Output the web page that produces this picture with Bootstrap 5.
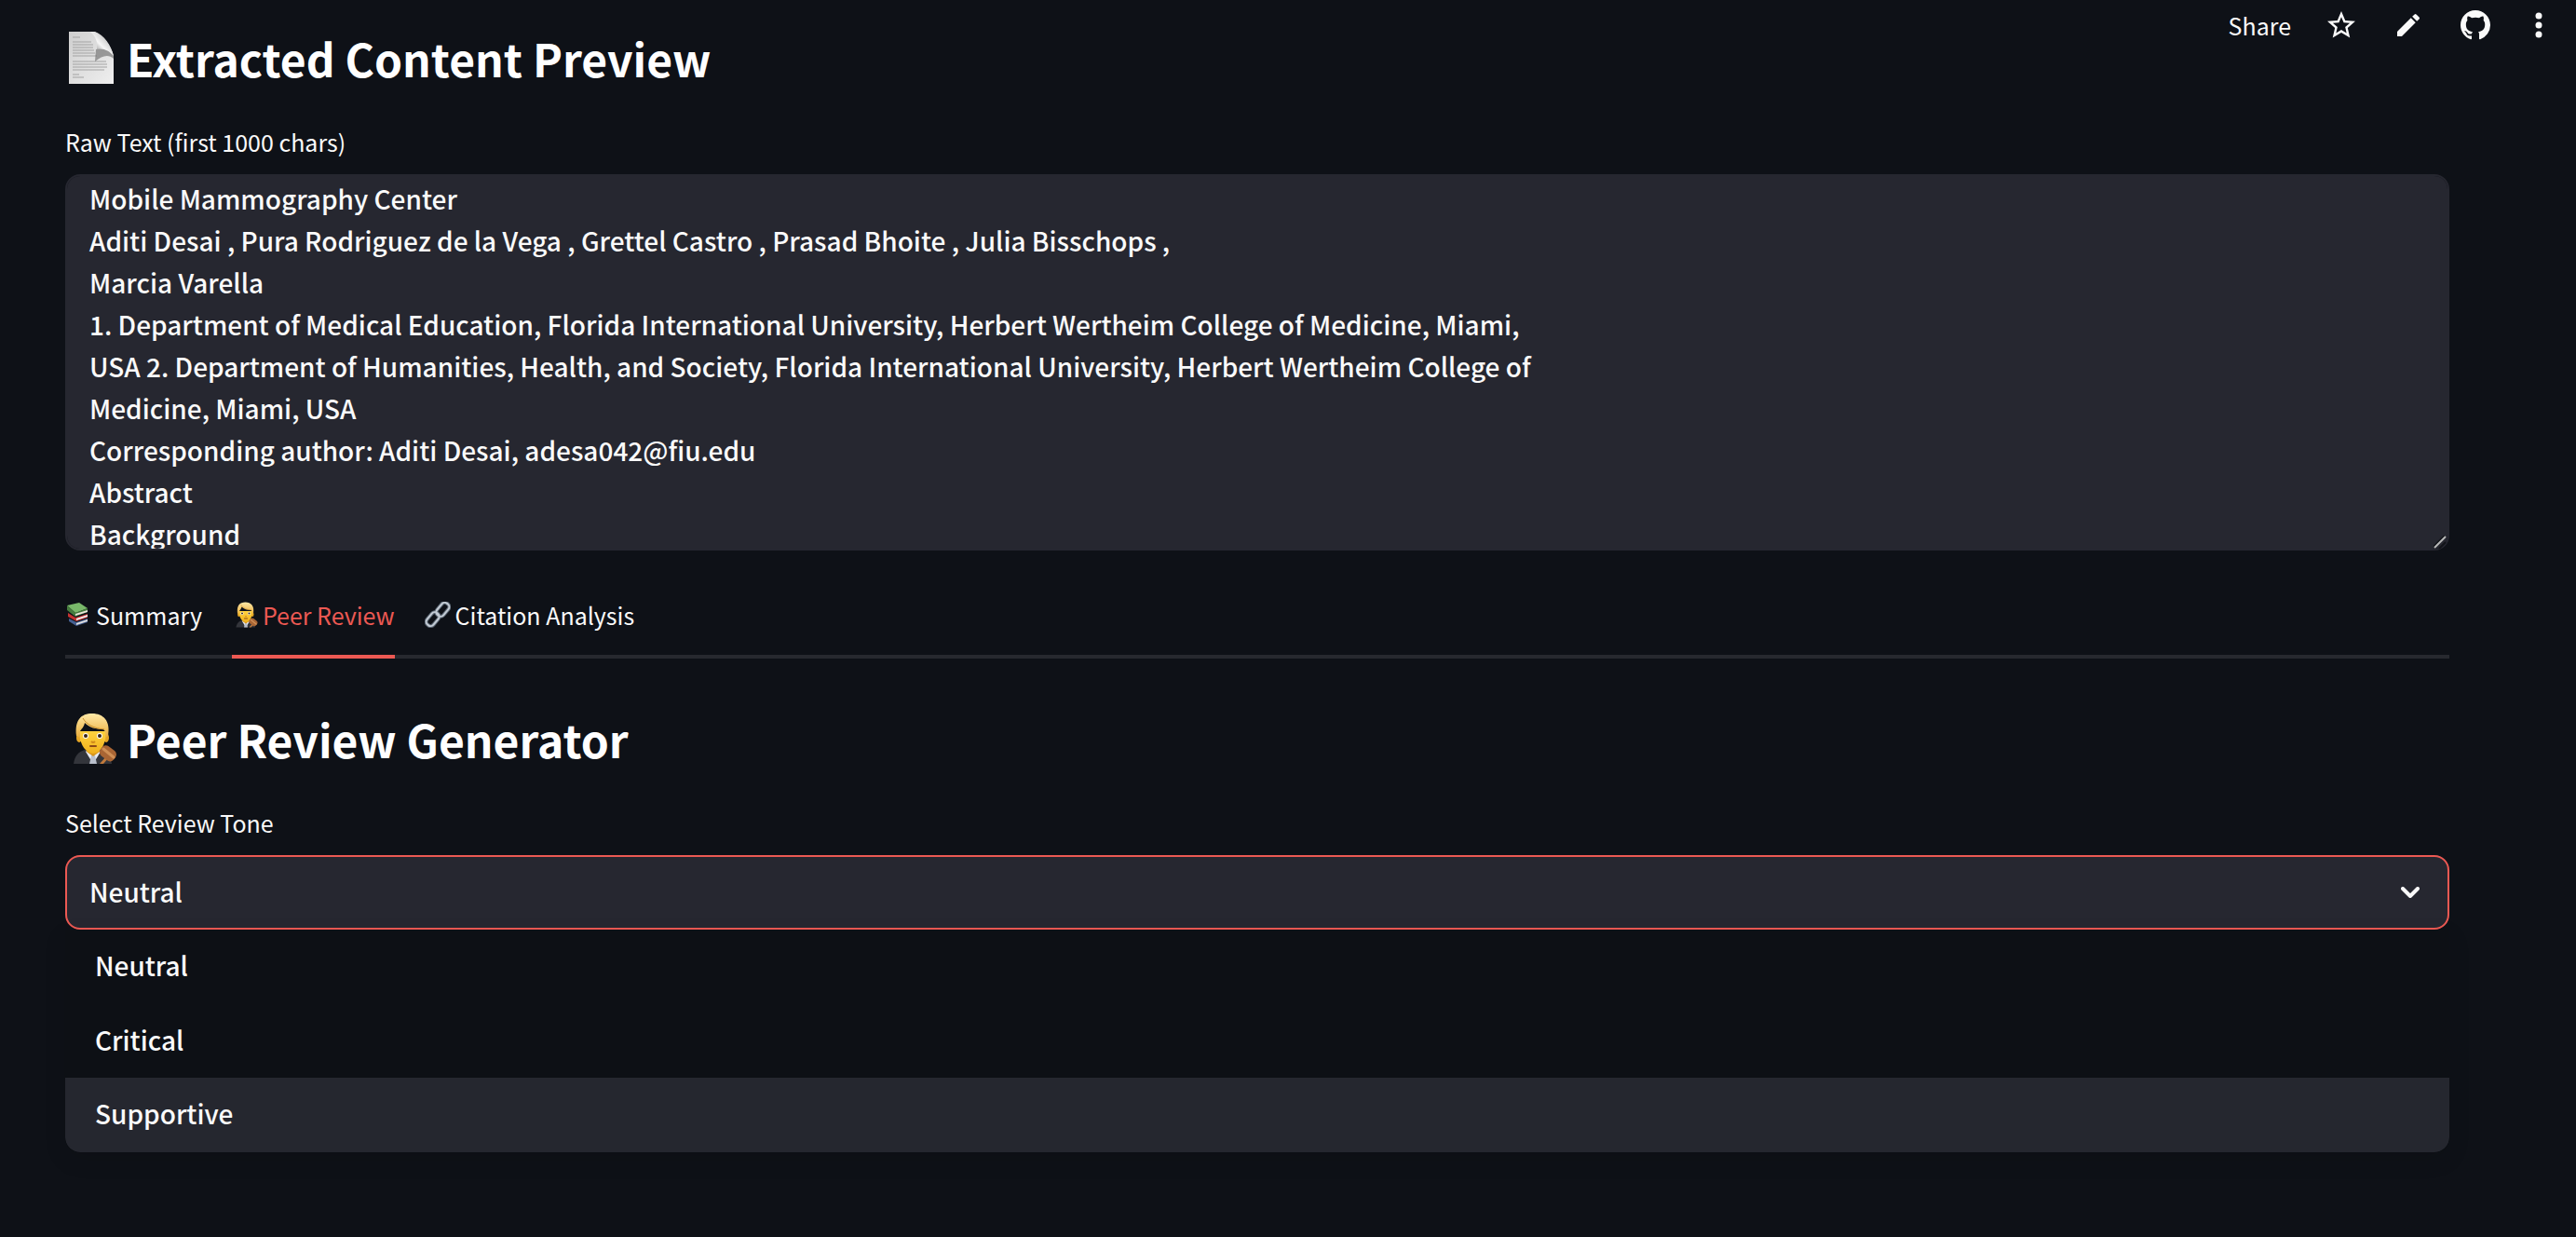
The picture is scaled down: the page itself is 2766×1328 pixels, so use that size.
<!DOCTYPE html>
<html lang="en" data-bs-theme="dark">
<head>
<meta charset="utf-8">
<meta name="viewport" content="width=device-width, initial-scale=1">
<title>Extracted Content Preview</title>
<link href="https://cdn.jsdelivr.net/npm/bootstrap@5.3.0/dist/css/bootstrap.min.css" rel="stylesheet">
<style>
:root { --page: #0e1117; --field: #262730; --ink: #fafafa; --accent: #ec5953; }
body { background: var(--page); color: var(--ink); font-family: "Noto Sans CJK SC", "Noto Sans", sans-serif; font-size: 25px; line-height: 40px; }
.toolbar { top: 0; right: 0; height: 54px; gap: 36px; padding-right: 26px; }
.toolbar .btn { font-size: 25px; line-height: 40px; color: var(--ink); }
.toolbar svg { display: block; }
.page-body { padding: 26px 136px 0 70px; min-height: 100vh; }
.section-title { font-size: 48px; line-height: 72px; font-weight: 700; gap: 10px; margin: 0; }
.section-title svg { flex: none; }
.field-label { display: block; line-height: 40px; margin: 34px 0 15px; }
.field-box { background-color: var(--field) !important; color: var(--ink) !important; border: 2px solid var(--field); border-radius: 16px; font-size: 28px; font-weight: 500; box-shadow: none !important; }
.raw-text { height: 404px; line-height: 45px; padding: 2px 24px 0; resize: none; overflow: hidden; white-space: pre; display: block; }
.grip { right: 3px; bottom: 2px; }
.tab-strip { margin-top: 32px; border-bottom: 4px solid #27292f; gap: 32px; --bs-nav-tabs-border-width: 0; flex-wrap: nowrap; }
.tab-strip .nav-link { color: var(--ink); background: none; border: 0; border-bottom: 4px solid transparent; border-radius: 0; padding: 17px 0 23px; margin-bottom: -4px; line-height: 40px; gap: 5px; }
.tab-strip .nav-link.active { color: var(--accent); background: none; border-bottom-color: var(--accent); }
.second { margin-top: 50px; }
.tone-select { height: 80px; border-color: var(--accent) !important; padding: 0 80px 2px 24px; background-image: none !important; }
.chevron { right: 32px; top: 34px; pointer-events: none; }
.tone-menu { top: 100%; left: 0; right: 0; z-index: 10; background: #0d1015; border-radius: 0 0 16px 16px; overflow: hidden; box-shadow: 0 8px 24px rgba(0,0,0,.1); }
.tone-menu .list-group-item { background: none; border: 0; margin: 0; color: var(--ink); font-size: 28px; font-weight: 500; line-height: 48px; padding: 14px 32px 18px; }
.tone-menu .list-group-item.active { background: #25272f; }
</style>
<script src="https://cdn.jsdelivr.net/npm/bootstrap@5.3.0/dist/js/bootstrap.bundle.min.js"></script>
</head>
<body>
<svg width="0" height="0" class="position-absolute" aria-hidden="true">
  <defs>
    <linearGradient id="skin" x1="0" y1="0" x2="0" y2="1"><stop offset="0" stop-color="#ffd23f"/><stop offset="1" stop-color="#efb01c"/></linearGradient>
    <linearGradient id="hair" x1="0" y1="0" x2="0" y2="1"><stop offset="0" stop-color="#ffe9a8"/><stop offset="1" stop-color="#e9ad3a"/></linearGradient>
    <linearGradient id="paper" x1="0" y1="0" x2="1" y2="1"><stop offset="0" stop-color="#cfcfcf"/><stop offset="1" stop-color="#efefef"/></linearGradient>
    <linearGradient id="curl" x1="0" y1="1" x2="1" y2="0"><stop offset="0" stop-color="#4a4a4a"/><stop offset=".45" stop-color="#f6f6f6"/><stop offset="1" stop-color="#9a9a9a"/></linearGradient>
    <symbol id="judge" viewBox="-9 0 56 56">
      <path d="M0 55c1-8 5-13 12-15h18c7 2 10 7 11 15z" fill="#33353b"/>
      <path d="M13 42l8 13 8-13-3-3H16z" fill="#e9edf3"/><path d="M19 46h4l2 9h-8z" fill="#b9c0cc"/>
      <path d="M14 34h14v8l-7 5-7-5z" fill="#d8951a"/>
      <ellipse cx="6" cy="27" rx="3" ry="5" fill="#e5a626"/><ellipse cx="35" cy="27" rx="3" ry="5" fill="#e5a626"/>
      <path d="M6 20h29c0 13-6 24-14 24S6 33 6 20z" fill="url(#skin)"/>
      <path d="M3 25C1 8 8 1 20 1s20 8 17 24l-3 2c1-5 0-7-2-9-8 0-15-2-20-7-1 5-4 7-5 9v7z" fill="url(#hair)"/>
      <path d="M10 6c4 7 12 11 23 12" stroke="#c98e2b" stroke-width="1" fill="none"/>
      <ellipse cx="13" cy="25" rx="3" ry="3" fill="#fff"/><ellipse cx="28" cy="25" rx="3" ry="3" fill="#fff"/>
      <circle cx="13" cy="25" r="2" fill="#392414"/><circle cx="28" cy="25" r="2" fill="#392414"/>
      <path d="M19 31q2 2 4 0" stroke="#d08a1a" stroke-width="2" fill="none"/><path d="M18 36h6" stroke="#8d4a17" stroke-width="2" fill="none" stroke-linecap="round"/>
      <path d="M36 46l-8 9h4l7-8z" fill="#c17a3c"/>
      <rect x="28" y="38" width="18" height="13" rx="5" transform="rotate(38 38 44)" fill="#a96534"/><path d="M32 39l11 9" stroke="#cf8f55" stroke-width="3" stroke-linecap="round"/>
    </symbol>
  </defs>
</svg>

<header class="toolbar position-absolute d-flex align-items-center">
  <button class="btn p-0 border-0" type="button">Share</button>
  <button class="btn p-0 border-0" type="button" aria-label="Favorite"><svg width="36" height="36" viewBox="0 0 24 24" fill="currentColor"><path d="M22 9.24l-7.19-.62L12 2 9.19 8.63 2 9.24l5.46 4.73L5.82 21 12 17.27 18.18 21l-1.63-7.03L22 9.24zM12 15.4l-3.76 2.27 1-4.28-3.32-2.88 4.38-.38L12 6.1l1.71 4.04 4.38.38-3.32 2.88 1 4.28L12 15.4z"/></svg></button>
  <button class="btn p-0 border-0" type="button" aria-label="Edit"><svg width="36" height="36" viewBox="-1.5 -1.5 27 27" fill="currentColor"><path d="M3 17.25V21h3.75L17.81 9.94l-3.75-3.75L3 17.25zM20.71 7.04a1 1 0 0 0 0-1.41l-2.34-2.34a1 1 0 0 0-1.41 0l-1.83 1.83 3.75 3.75 1.83-1.83z"/></svg></button>
  <button class="btn p-0 border-0" type="button" aria-label="View source"><svg width="36" height="36" viewBox="-1 -1 18 18" fill="currentColor"><path d="M8 0C3.58 0 0 3.58 0 8c0 3.54 2.29 6.53 5.47 7.59.4.07.55-.17.55-.38 0-.19-.01-.82-.01-1.49-2.01.37-2.53-.49-2.69-.94-.09-.23-.48-.94-.82-1.13-.28-.15-.68-.52-.01-.53.63-.01 1.08.58 1.23.82.72 1.21 1.87.87 2.33.66.07-.52.28-.87.51-1.07-1.78-.2-3.64-.89-3.64-3.95 0-.87.31-1.59.82-2.15-.08-.2-.36-1.02.08-2.12 0 0 .67-.21 2.2.82.64-.18 1.32-.27 2-.27s1.36.09 2 .27c1.53-1.04 2.2-.82 2.2-.82.44 1.1.16 1.92.08 2.12.51.56.82 1.27.82 2.15 0 3.07-1.87 3.75-3.65 3.95.29.25.54.73.54 1.48 0 1.07-.01 1.93-.01 2.2 0 .21.15.46.55.38A8.01 8.01 0 0 0 16 8c0-4.42-3.58-8-8-8z"/></svg></button>
  <button class="btn p-0 border-0" type="button" aria-label="Menu"><svg width="28" height="32" viewBox="0 0 28 32" fill="currentColor"><circle cx="14" cy="6" r="3.5"/><circle cx="14" cy="16" r="3.5"/><circle cx="14" cy="26" r="3.5"/></svg></button>
</header>

<main class="page-body">
  <h2 class="section-title d-flex align-items-center">
    <svg width="56" height="56" viewBox="0 0 56 56" aria-hidden="true"><path d="M4 0h27c10 4 18 15 21 26v30H4z" fill="url(#paper)"/><path d="M8 6h8M8 11h20M8 14h22M8 17h22M8 20h23M8 23h24M8 26h26M8 32h36M8 35h37M8 38h37M8 41h34M8 46h7M8 49h12" stroke="#a3a3a3" stroke-width="1"/><path d="M27 0h5c10 4 17 14 20 26-5-6-11-9-18-7 1-8-1-14-7-19z" fill="url(#curl)"/><path d="M33 19c7-2 14 1 19 7v3c-5-5-12-4-20 3z" fill="#666" opacity=".6"/></svg>
    <span>Extracted Content Preview</span>
  </h2>
  <label class="field-label" for="raw">Raw Text (first 1000 chars)</label>
  <div class="position-relative">
    <textarea id="raw" class="form-control field-box raw-text" spellcheck="false">Mobile Mammography Center
Aditi Desai , Pura Rodriguez de la Vega , Grettel Castro , Prasad Bhoite , Julia Bisschops ,
Marcia Varella
1. Department of Medical Education, Florida International University, Herbert Wertheim College of Medicine, Miami,
USA 2. Department of Humanities, Health, and Society, Florida International University, Herbert Wertheim College of
Medicine, Miami, USA
Corresponding author: Aditi Desai, adesa042@fiu.edu
Abstract
Background</textarea>
    <svg class="grip position-absolute" width="14" height="14" viewBox="0 0 14 14" aria-hidden="true"><path d="M0 12L12 0M6 14l7-7" stroke="#111318" stroke-width="2"/><path d="M1 13L13 1" stroke="#b9b9b9" stroke-width="2"/></svg>
  </div>

  <ul class="nav nav-tabs tab-strip" role="tablist">
    <li class="nav-item"><button class="nav-link d-flex align-items-center" type="button" role="tab">
      <svg width="28" height="28" viewBox="0 0 28 28" aria-hidden="true"><path d="M2 4L15 1l9 6-13 5z" fill="#79b86a"/><path d="M2 4l9 8 13-5v4l-13 5-9-7z" fill="#467c3e"/><path d="M11 13l13-4v2l-13 4z" fill="#e8e4d8"/><path d="M3 12l8 5 13-4v4l-12 4-9-5z" fill="#c43331"/><path d="M12 18l12-4v2l-12 4z" fill="#eee"/><path d="M4 18l8 4 12-4v4l-12 4-8-5z" fill="#455f91"/><path d="M12 23l12-4v2l-12 4z" fill="#ddd"/></svg>
      <span>Summary</span></button></li>
    <li class="nav-item"><button class="nav-link active d-flex align-items-center" type="button" role="tab" aria-selected="true">
      <svg width="28" height="28" aria-hidden="true"><use href="#judge"/></svg>
      <span>Peer Review</span></button></li>
    <li class="nav-item"><button class="nav-link d-flex align-items-center" type="button" role="tab">
      <svg width="28" height="28" viewBox="0 0 28 28" fill="none" aria-hidden="true"><g stroke="#596471" stroke-width="4"><rect x="11" y="4" width="16" height="9" rx="4" transform="rotate(-50 19 8)"/><rect x="1" y="14" width="16" height="9" rx="4" transform="rotate(-50 9 19)"/></g><g stroke="#c3cbd4" stroke-width="2"><rect x="11" y="4" width="16" height="9" rx="4" transform="rotate(-50 19 8)"/><rect x="1" y="14" width="16" height="9" rx="4" transform="rotate(-50 9 19)"/></g></svg>
      <span>Citation Analysis</span></button></li>
  </ul>

  <h2 class="section-title second d-flex align-items-center">
    <svg width="56" height="56" aria-hidden="true"><use href="#judge"/></svg>
    <span>Peer Review Generator</span>
  </h2>
  <label class="field-label" for="tone">Select Review Tone</label>
  <div class="position-relative">
    <select id="tone" class="form-select field-box tone-select"><option selected>Neutral</option><option>Critical</option><option>Supportive</option></select>
    <svg class="chevron position-absolute" width="20" height="12" viewBox="0 0 20 12" fill="none" aria-hidden="true"><path d="M2 2l8 8 8-8" stroke="#fafafa" stroke-width="4" stroke-linecap="round" stroke-linejoin="round"/></svg>
    <div class="list-group tone-menu position-absolute" role="listbox" aria-label="Select Review Tone">
      <button type="button" class="list-group-item list-group-item-action" role="option">Neutral</button>
      <button type="button" class="list-group-item list-group-item-action" role="option">Critical</button>
      <button type="button" class="list-group-item list-group-item-action active" role="option">Supportive</button>
    </div>
  </div>
</main>
</body>
</html>
